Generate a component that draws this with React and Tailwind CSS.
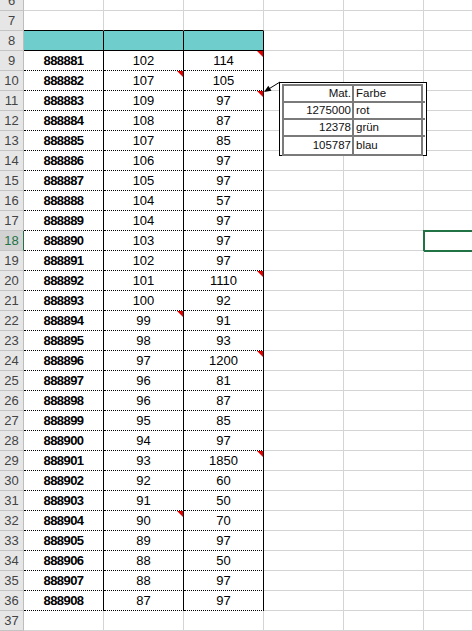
import React from "react";

const data = [
  [9, "888881", "102", "114"],
  [10, "888882", "107", "105"],
  [11, "888883", "109", "97"],
  [12, "888884", "108", "87"],
  [13, "888885", "107", "85"],
  [14, "888886", "106", "97"],
  [15, "888887", "105", "97"],
  [16, "888888", "104", "57"],
  [17, "888889", "104", "97"],
  [18, "888890", "103", "97"],
  [19, "888891", "102", "97"],
  [20, "888892", "101", "1110"],
  [21, "888893", "100", "92"],
  [22, "888894", "99", "91"],
  [23, "888895", "98", "93"],
  [24, "888896", "97", "1200"],
  [25, "888897", "96", "81"],
  [26, "888898", "96", "87"],
  [27, "888899", "95", "85"],
  [28, "888900", "94", "97"],
  [29, "888901", "93", "1850"],
  [30, "888902", "92", "60"],
  [31, "888903", "91", "50"],
  [32, "888904", "90", "70"],
  [33, "888905", "89", "97"],
  [34, "888906", "88", "50"],
  [35, "888907", "88", "97"],
  [36, "888908", "87", "97"],
];

// cells with a comment marker
const notes = { "9D": 1, "10C": 1, "11D": 1, "20D": 1, "22C": 1, "24D": 1, "29D": 1, "32C": 1 };

const grayCell = "border-r border-b border-[#d4d4d4]";

function Marker() {
  return (
    <span className="absolute right-0 top-0 w-0 h-0 border-t-[6px] border-l-[6px] border-t-[#e00000] border-l-transparent" />
  );
}

function Cell({ className = "", children, note, selected }) {
  return (
    <div className={`relative flex items-center justify-center w-[80px] h-full shrink-0 ${className}`}>
      {children}
      {note && <Marker />}
      {selected && (
        <span className="absolute -left-[1px] -top-[1px] w-[82px] h-[22px] border-2 border-[#217346]" />
      )}
    </div>
  );
}

function RowHead({ n }) {
  const sel = n === 18;
  return (
    <div
      className={`flex items-center justify-center w-[24px] h-full shrink-0 border-b border-[#c4c4c4] text-[13px] ${
        sel ? "bg-[#d2d2d2] text-[#217346] border-r border-r-[#217346]" : "bg-[#e6e6e6] text-[#444] border-r border-r-[#bdbdbd]"
      }`}
    >
      {n}
    </div>
  );
}

function Row({ n }) {
  const rec = data.find((d) => d[0] === n);
  let tableCell = grayCell;
  if (n === 7) tableCell = "border-r border-r-[#d4d4d4] border-b border-b-black";
  if (n === 8) tableCell = "bg-[#6fcdcb] border-r border-b border-black";
  if (rec) tableCell = "border-r border-r-black border-b border-b-black [border-bottom-style:dotted]";

  return (
    <div className="flex h-[20px]">
      <RowHead n={n} />
      <Cell className={`${tableCell} font-bold text-[13px] tracking-[-0.6px]`}>{rec && rec[1]}</Cell>
      <Cell className={`${tableCell} text-[13px]`} note={notes[n + "C"]}>{rec && rec[2]}</Cell>
      <Cell className={`${tableCell} text-[13px]`} note={notes[n + "D"]}>{rec && rec[3]}</Cell>
      <Cell className={grayCell} />
      <Cell className={grayCell} />
      <Cell className={grayCell} selected={n === 18} />
    </div>
  );
}

function CommentBox() {
  const rows = [
    ["Mat.", "Farbe"],
    ["1275000", "rot"],
    ["12378", "grün"],
    ["105787", "blau"],
  ];
  return (
    <>
      <svg className="absolute left-[260px] top-[78px]" width="24" height="18" viewBox="0 0 24 18">
        <line x1="20" y1="4" x2="9" y2="10.8" stroke="#000" strokeWidth="1" />
        <polygon points="4,14 11.5,12.8 8.3,7.8" fill="#000" />
      </svg>
      <div className="absolute left-[279px] top-[82px] w-[148px] h-[74px] bg-white border border-black pl-[2px] pt-[1px]">
        <div className="grid grid-cols-[70px_71px] border-2 border-[#7a7a7a] w-[141px] text-[11.5px] text-[#111]">
          {rows.map((r, i) => (
            <React.Fragment key={i}>
              <div className={`h-[17px] flex items-center justify-end pr-[1px] border-r-2 border-[#7a7a7a] ${i < 3 ? "border-b-2" : ""}`}>
                {r[0]}
              </div>
              <div className={`h-[17px] flex items-center pl-[2px] border-[#7a7a7a] ${i < 3 ? "border-b-2" : ""}`}>
                {r[1]}
              </div>
            </React.Fragment>
          ))}
        </div>
      </div>
    </>
  );
}

export default function App() {
  const rowNums = [];
  for (let i = 6; i <= 37; i++) rowNums.push(i);

  return (
    <div className="relative w-[472px] h-[631px] overflow-hidden bg-white text-black font-['Liberation_Sans',Arial,sans-serif]">
      <div className="-mt-[9px]">
        {rowNums.map((n) => (
          <Row key={n} n={n} />
        ))}
      </div>
      <CommentBox />
    </div>
  );
}
